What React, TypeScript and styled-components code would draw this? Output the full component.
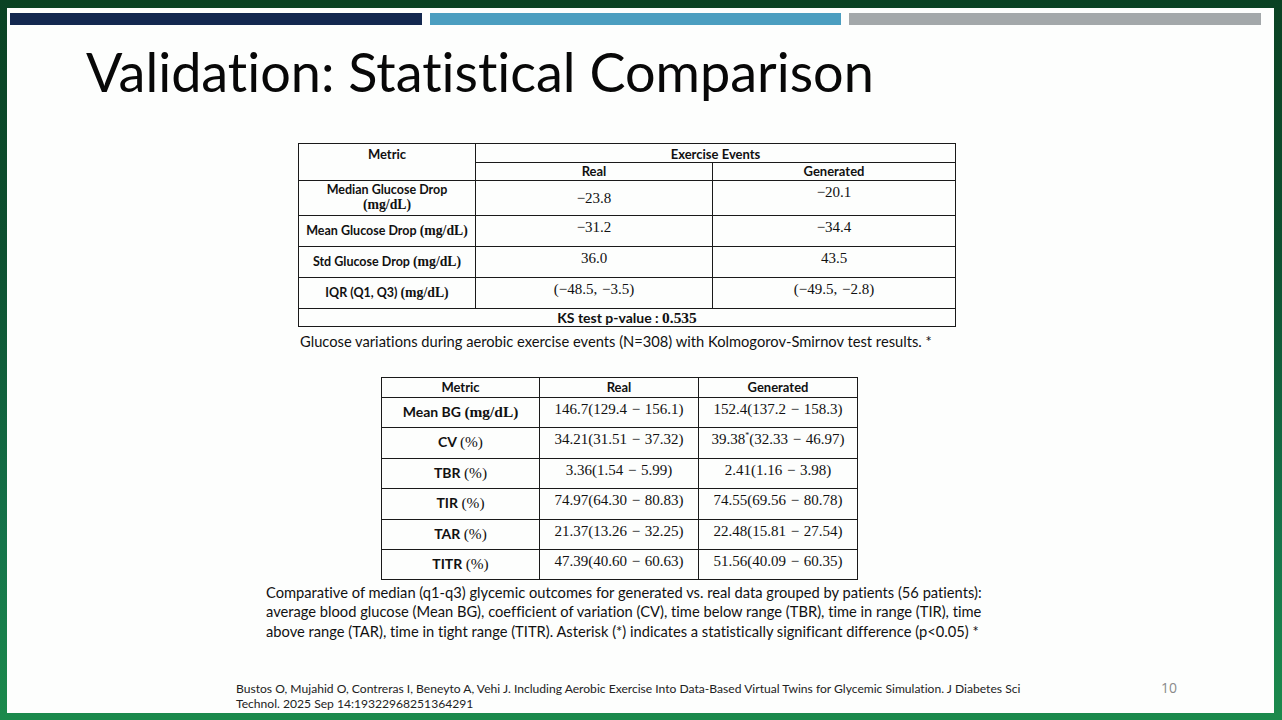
import React from 'react';
import styled, { createGlobalStyle } from 'styled-components';

const GlobalStyle = createGlobalStyle`
  html, body {
    margin: 0;
    padding: 0;
    overflow: hidden;
  }
  body {
    font-family: Lato, 'Open Sans', sans-serif;
    font-variant-ligatures: none;
    color: #111;
  }
`;

const SANS = `Lato, 'Open Sans', sans-serif`;
const MATH = `'Liberation Serif', 'DejaVu Serif', serif`;

const Frame = styled.div`
  width: 1282px;
  height: 720px;
  box-sizing: border-box;
  padding: 8px 8px 7px 7px;
  background: linear-gradient(to bottom, #0a4223 0%, #0d5030 35%, #15744a 75%, #1b8a4c 100%);
`;

const Slide = styled.div`
  position: relative;
  height: 100%;
  background: #fdfefd;
  display: flex;
  flex-direction: column;
`;

const Bars = styled.div`
  display: flex;
  gap: 8px;
  padding: 5px 13px 0 3px;
`;

const Bar = styled.div<{ $color: string }>`
  flex: 1;
  height: 12px;
  background: ${(p) => p.$color};
`;

const Title = styled.h1`
  margin: 14px 0 0 79px;
  font-family: ${SANS};
  font-weight: 400;
  font-size: 54px;
  line-height: 66px;
  color: #080808;
`;

const Grid = styled.table<{ $left: number; $top: number; $width: number }>`
  width: ${(p) => p.$width}px;
  margin: ${(p) => p.$top}px 0 0 ${(p) => p.$left}px;
  border-collapse: collapse;
  table-layout: fixed;
  border: 1.5px solid #1a1a1a;
`;

const Cell = styled.td<{ $h?: number; $top?: boolean }>`
  ${(p) => (p.$h ? `height: ${p.$h}px;` : '')}
  border: 1.5px solid #1a1a1a;
  padding: ${(p) => (p.$top ? '3px 4px 0' : '0 4px')};
  vertical-align: ${(p) => (p.$top ? 'top' : 'middle')};
  text-align: center;
  box-sizing: border-box;
  line-height: 1.2;
`;

const Head = styled(Cell).attrs({ as: 'th' })`
  font-family: ${SANS};
  font-weight: 700;
  font-size: 13px;
  line-height: 15px;
`;

const Label = styled(Cell)<{ $size?: number }>`
  font-family: ${SANS};
  font-weight: 700;
  font-size: ${(p) => p.$size || 12.5}px;
`;

const Value = styled(Cell)`
  font-family: ${MATH};
  font-size: 15px;
  line-height: 17px;
  word-spacing: 1px;
`;

const Unit = styled.span<{ $bold?: boolean }>`
  font-family: ${MATH};
  font-weight: ${(p) => (p.$bold ? 700 : 400)};
  font-size: 1.1em;
`;

const Star = styled.sup`
  font-size: 8px;
  line-height: 0;
`;

const Caption = styled.p<{ $left: number; $top: number }>`
  margin: ${(p) => p.$top}px 0 0 ${(p) => p.$left}px;
  font-family: ${SANS};
  font-size: 14.7px;
  line-height: 19.5px;
  color: #111;
  white-space: nowrap;
`;

const Footer = styled.p`
  margin: auto 0 2px 229px;
  font-family: ${SANS};
  font-size: 12.1px;
  line-height: 15px;
  color: #222;
  white-space: nowrap;
`;

const PageNum = styled.span`
  position: absolute;
  right: 97px;
  bottom: 16px;
  font-family: 'Open Sans', sans-serif;
  font-size: 14px;
  color: #8a8a8a;
`;

const exerciseRows = [
  { label: 'Median Glucose Drop', real: '−23.8', gen: '−20.1', h: 35, realTop: false },
  { label: 'Mean Glucose Drop', real: '−31.2', gen: '−34.4', h: 31, realTop: true },
  { label: 'Std Glucose Drop', real: '36.0', gen: '43.5', h: 31, realTop: true },
  { label: 'IQR (Q1, Q3)', real: '(−48.5, −3.5)', gen: '(−49.5, −2.8)', h: 31, realTop: true },
];

const outcomeRows = [
  { label: 'Mean BG', unit: '(mg/dL)', bold: true, real: '146.7(129.4 − 156.1)', gen: '152.4(137.2 − 158.3)', h: 30 },
  { label: 'CV', unit: '(%)', bold: false, real: '34.21(31.51 − 37.32)', gen: '39.38', genRest: '(32.33 − 46.97)', h: 31 },
  { label: 'TBR', unit: '(%)', bold: false, real: '3.36(1.54 − 5.99)', gen: '2.41(1.16 − 3.98)', h: 30 },
  { label: 'TIR', unit: '(%)', bold: false, real: '74.97(64.30 − 80.83)', gen: '74.55(69.56 − 80.78)', h: 31 },
  { label: 'TAR', unit: '(%)', bold: false, real: '21.37(13.26 − 32.25)', gen: '22.48(15.81 − 27.54)', h: 30 },
  { label: 'TITR', unit: '(%)', bold: false, real: '47.39(40.60 − 60.63)', gen: '51.56(40.09 − 60.35)', h: 30 },
];

export default function App() {
  return (
    <>
      <GlobalStyle />
      <Frame>
        <Slide>
          <Bars>
            <Bar $color="#13284f" />
            <Bar $color="#4b9ec0" />
            <Bar $color="#a3a8aa" />
          </Bars>
          <Title>Validation: Statistical Comparison</Title>

          <Grid $left={291} $top={38} $width={657}>
            <colgroup>
              <col style={{ width: 177 }} />
              <col style={{ width: 237 }} />
              <col style={{ width: 243 }} />
            </colgroup>
            <tbody>
              <tr>
                <Head $h={19} rowSpan={2} style={{ verticalAlign: 'top', paddingTop: 3 }}>
                  Metric
                </Head>
                <Head $h={19} colSpan={2} style={{ paddingTop: 2 }}>
                  Exercise Events
                </Head>
              </tr>
              <tr>
                <Head $h={18}>Real</Head>
                <Head $h={18}>Generated</Head>
              </tr>
              {exerciseRows.map((r, i) => (
                <tr key={r.label}>
                  {i === 0 ? (
                    <Label $h={r.h}>
                      {r.label}
                      <br />
                      <Unit $bold>(mg/dL)</Unit>
                    </Label>
                  ) : (
                    <Label $h={r.h}>
                      {r.label} <Unit $bold>(mg/dL)</Unit>
                    </Label>
                  )}
                  <Value $top={r.realTop}>{r.real}</Value>
                  <Value $top>{r.gen}</Value>
                </tr>
              ))}
              <tr>
                <Label $h={18} colSpan={3} $size={14} style={{ lineHeight: '15px' }}>
                  KS test p-value : <Unit $bold>0.535</Unit>
                </Label>
              </tr>
            </tbody>
          </Grid>
          <Caption $left={293} $top={5}>
            Glucose variations during aerobic exercise events (N=308) with Kolmogorov-Smirnov test results. *
          </Caption>

          <Grid $left={374} $top={25} $width={476}>
            <colgroup>
              <col style={{ width: 158 }} />
              <col style={{ width: 159 }} />
              <col style={{ width: 159 }} />
            </colgroup>
            <tbody>
              <tr>
                <Head $h={20}>Metric</Head>
                <Head $h={20}>Real</Head>
                <Head $h={20}>Generated</Head>
              </tr>
              {outcomeRows.map((r) => (
                <tr key={r.label}>
                  <Label $h={r.h} $size={14}>
                    {r.label} <Unit $bold={r.bold}>{r.unit}</Unit>
                  </Label>
                  <Value $top>{r.real}</Value>
                  <Value $top>
                    {r.gen}
                    {r.genRest ? (
                      <>
                        <Star>*</Star>
                        {r.genRest}
                      </>
                    ) : null}
                  </Value>
                </tr>
              ))}
            </tbody>
          </Grid>
          <Caption $left={259} $top={3}>
            Comparative of median (q1-q3) glycemic outcomes for generated vs. real data grouped by patients (56 patients):
            <br />
            average blood glucose (Mean BG), coefficient of variation (CV), time below range (TBR), time in range (TIR), time
            <br />
            above range (TAR), time in tight range (TITR). Asterisk (*) indicates a statistically significant difference (p&lt;0.05) *
          </Caption>

          <Footer>
            Bustos O, Mujahid O, Contreras I, Beneyto A, Vehi J. Including Aerobic Exercise Into Data-Based Virtual Twins for
            Glycemic Simulation. J Diabetes Sci
            <br />
            Technol. 2025 Sep 14:19322968251364291
          </Footer>
          <PageNum>10</PageNum>
        </Slide>
      </Frame>
    </>
  );
}
